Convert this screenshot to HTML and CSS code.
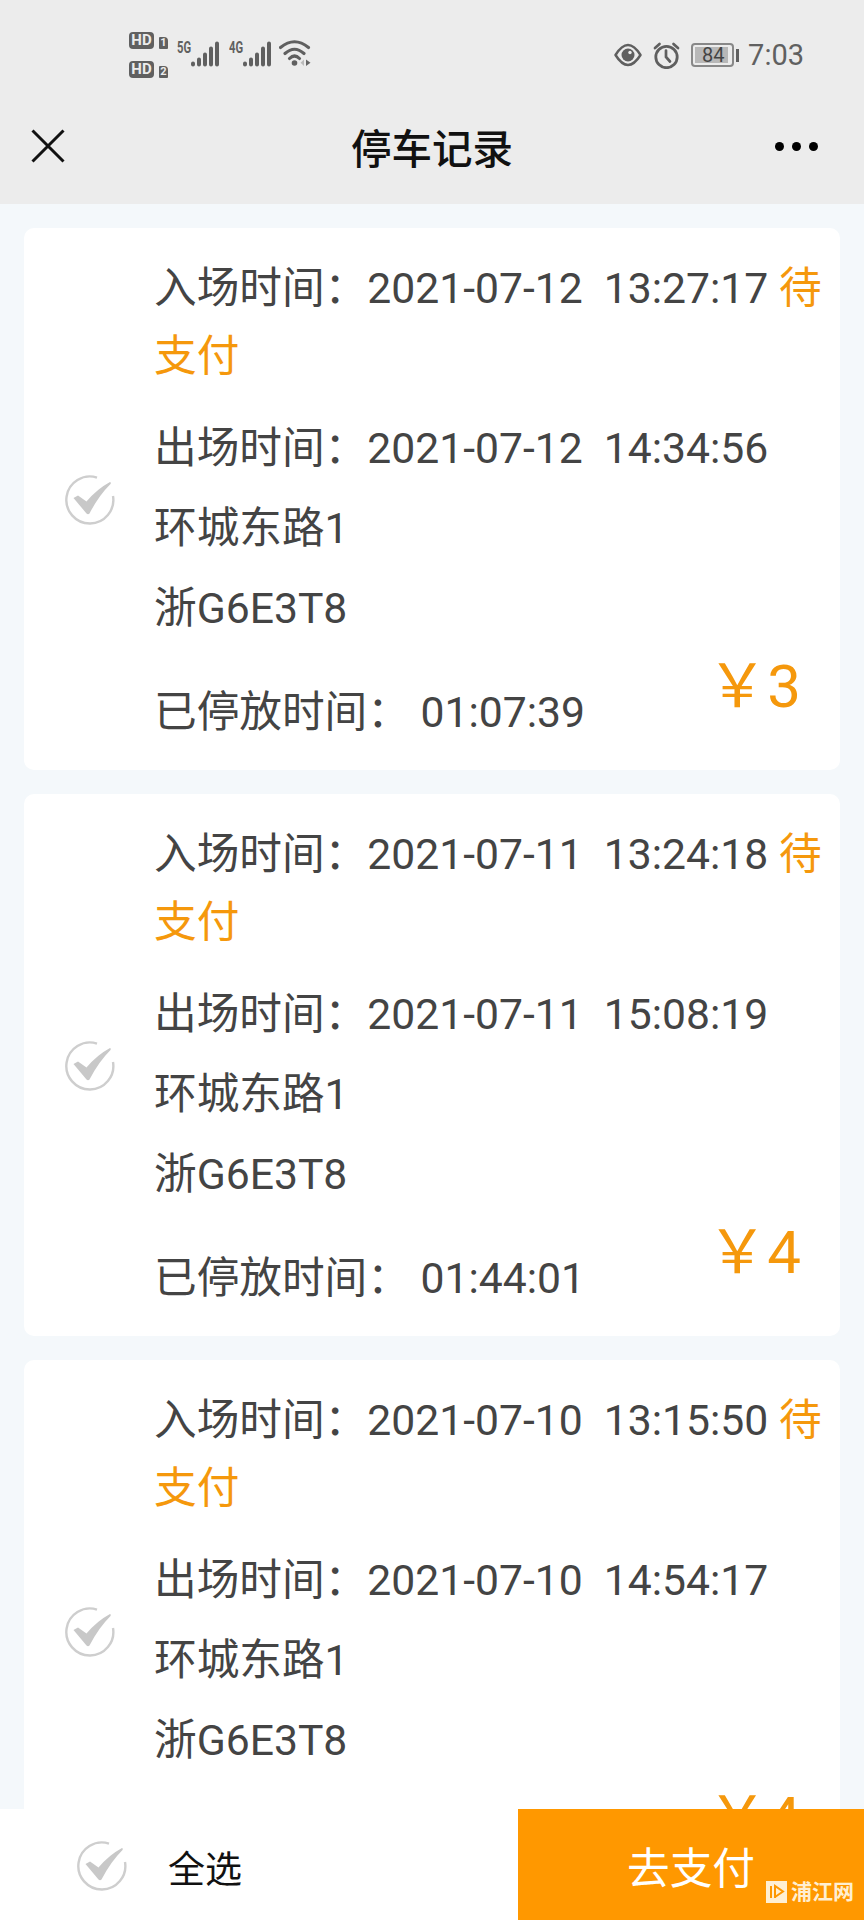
FILE: index.html
```
<!DOCTYPE html>
<html lang="zh-CN">
<head>
    <meta charset="UTF-8">
    <meta name="viewport" content="width=device-width, initial-scale=1.0">
    <title>停车记录</title>
    <link rel="stylesheet" href="styles.css">
</head>
<body>
    <svg class="defs" width="0" height="0">
        <symbol id="check" viewBox="0 0 50 50">
            <path d="M32 2.600A23.500 23.500 0 1 0 48 21" fill="none" stroke="#cecece" stroke-width="2.400"/>
            <path d="M8.500 23L13 20.500L21.500 26.500Q32 14 45 7Q46.500 7.500 45.500 9Q33.500 21 24.500 38.500Q23 40 21.500 38.500Z" fill="#c8c8c8"/>
        </symbol>
        <symbol id="signal" viewBox="0 0 28 26">
            <path d="M2 22.500V23.500M8 18.500V23.500M14 13.500V23.500M20 7.500V23.500M26 2.500V23.500" fill="none" stroke="#606060" stroke-width="4" stroke-linecap="round"/>
        </symbol>
    </svg>

    <header>
        <div class="status">
            <div class="status-left">
                <div class="sims">
                    <div><span class="hd">HD</span><span class="sim">1</span></div>
                    <div><span class="hd">HD</span><span class="sim">2</span></div>
                </div>
                <span class="net">5G</span>
                <svg class="signal" width="28" height="26"><use href="#signal"/></svg>
                <span class="net net-4g">4G</span>
                <svg class="signal" width="28" height="26"><use href="#signal"/></svg>
                <svg class="wifi" width="32" height="27" viewBox="0 0 32 27">
                    <path d="M1.500 7.500Q15.500-4 29.500 7.500M6 13.500Q15.500 5 25 13.500M10.500 18.500Q15.500 13.500 20.500 18.500" fill="none" stroke="#606060" stroke-width="3.100" stroke-linecap="round"/>
                    <circle cx="15.500" cy="23" r="2.800" fill="#606060"/>
                    <path d="M25 19.500V26L21.500 22.800Z" fill="#bbb"/>
                    <path d="M27 19.500L31.500 22.800L27 26Z" fill="#666"/>
                </svg>
            </div>
            <div class="status-right">
                <svg width="28" height="24" viewBox="0 0 28 24">
                    <path d="M1.500 12Q14-8 26.500 12Q14 32 1.500 12Z" fill="none" stroke="#5f5f5f" stroke-width="2.500" stroke-linejoin="round"/>
                    <circle cx="14" cy="12" r="6.500" fill="#5f5f5f"/>
                    <circle cx="16" cy="9.500" r="1.700" fill="#ececec"/>
                </svg>
                <svg class="alarm" width="27" height="27" viewBox="0 0 27 27">
                    <circle cx="13.500" cy="15" r="10.700" fill="none" stroke="#5f5f5f" stroke-width="2.800"/>
                    <path d="M13 8.500V15L17 19.500M2 6L6.500 2M20.500 2L25 6" fill="none" stroke="#5f5f5f" stroke-width="2.700" stroke-linecap="round"/>
                </svg>
                <div class="battery"><span>84</span></div>
                <i class="battery-cap"></i>
                <span class="clock">7:03</span>
            </div>
        </div>
        <div class="nav">
            <svg width="34" height="34" viewBox="0 0 34 34">
                <path d="M1.500 1.500L32.500 32.500M32.500 1.500L1.500 32.500" stroke="#111" stroke-width="3"/>
            </svg>
            <h1>停车记录</h1>
            <div class="more"><i></i><i></i><i></i></div>
        </div>
    </header>

    <main>
        <section class="card">
            <svg class="check"><use href="#check"/></svg>
            <div class="info">
                <p class="enter">入场时间：2021-07-12&nbsp; 13:27:17 <span class="state">待支付</span></p>
                <p>出场时间：2021-07-12&nbsp; 14:34:56</p>
                <p>环城东路1</p>
                <p>浙G6E3T8</p>
                <div class="bottom">
                    <p>已停放时间： 01:07:39</p>
                    <span class="price">￥3</span>
                </div>
            </div>
        </section>
        <section class="card">
            <svg class="check"><use href="#check"/></svg>
            <div class="info">
                <p class="enter">入场时间：2021-07-11&nbsp; 13:24:18 <span class="state">待支付</span></p>
                <p>出场时间：2021-07-11&nbsp; 15:08:19</p>
                <p>环城东路1</p>
                <p>浙G6E3T8</p>
                <div class="bottom">
                    <p>已停放时间： 01:44:01</p>
                    <span class="price">￥4</span>
                </div>
            </div>
        </section>
        <section class="card">
            <svg class="check"><use href="#check"/></svg>
            <div class="info">
                <p class="enter">入场时间：2021-07-10&nbsp; 13:15:50 <span class="state">待支付</span></p>
                <p>出场时间：2021-07-10&nbsp; 14:54:17</p>
                <p>环城东路1</p>
                <p>浙G6E3T8</p>
                <div class="bottom">
                    <p></p>
                    <span class="price">￥4</span>
                </div>
            </div>
        </section>
    </main>

    <footer>
        <div class="all">
            <svg class="check"><use href="#check"/></svg>
            <span>全选</span>
        </div>
        <div class="pay">去支付</div>
        <div class="watermark">
            <svg width="21" height="22" viewBox="0 0 21 22">
                <path d="M0 0H21V22H0Z" fill="#ffefd2"/>
                <path d="M5 5V17M9 17V5L17 10.500L9 16" fill="none" stroke="#ff9800" stroke-width="2"/>
            </svg>
            <span>浦江网</span>
        </div>
    </footer>
</body>
</html>
```
FILE: styles.css
```
* {
    box-sizing: border-box;
}
body {
    margin: 0;
    height: 1920px;
    display: flex;
    flex-direction: column;
    overflow: hidden;
    background: #f4f8fb;
    color: #444;
    font-family: Roboto, "Noto Sans CJK SC", sans-serif;
}
p, h1 {
    margin: 0;
}
svg {
    display: block;
    flex: none;
}
.defs {
    position: absolute;
}

/* header */
header {
    flex: none;
    height: 204px;
    background: #ececec;
}
.status {
    height: 92px;
    padding: 30px 60px 0 129px;
    display: flex;
    justify-content: space-between;
    color: #606060;
}
.status-left, .status-right {
    display: flex;
    align-items: flex-start;
}
.sims {
    display: flex;
    flex-direction: column;
    gap: 12px;
    margin-top: 2px;
    width: 48px;
}
.sims div {
    display: flex;
    align-items: flex-end;
    gap: 5px;
}
.hd, .sim {
    background: #606060;
    color: #ececec;
    border-radius: 4px;
    font-weight: bold;
    text-align: center;
}
.hd {
    width: 25px;
    height: 17px;
    font-size: 15px;
    line-height: 17px;
}
.sim {
    width: 9px;
    height: 12px;
    border-radius: 1px 4px 1px 1px;
    font-size: 11px;
    line-height: 12px;
}
.net {
    width: 14px;
    margin-top: 9px;
    font: bold 16px/17px Roboto, sans-serif;
    transform: scaleX(.7);
    transform-origin: left;
}
.net-4g {
    margin-left: 10px;
}
.signal {
    margin-top: 11px;
}
.wifi {
    margin: 10px 0 0 8px;
}
.status-right {
    align-items: center;
    height: 50px;
}
.alarm {
    margin-left: 11px;
}
.battery {
    width: 43px;
    height: 24px;
    margin-left: 11px;
    padding: 2px;
    border: 2px solid #888;
    border-radius: 4px;
}
.battery span {
    display: block;
    width: 33px;
    height: 16px;
    background: #b8b8b8;
    color: #444;
    font-size: 20px;
    line-height: 17px;
    padding-left: 7px;
}
.battery-cap {
    width: 3px;
    height: 13px;
    margin-left: 2px;
    background: #606060;
}
.clock {
    margin-left: 9px;
    font-size: 29px;
    line-height: 52px;
}
.nav {
    height: 108px;
    padding: 0 46px 0 31px;
    display: grid;
    grid-template-columns: 1fr auto 1fr;
    align-items: center;
    color: #111;
}
h1 {
    margin-left: 15px;
    font-size: 40.500px;
    font-weight: 500;
}
.more {
    display: flex;
    justify-content: flex-end;
    gap: 8px;
}
.more i {
    width: 9px;
    height: 9px;
    border-radius: 50%;
    background: #000;
}

/* records */
main {
    flex: 1;
    min-height: 0;
    overflow: hidden;
    padding: 24px 24px 0;
}
.card {
    display: flex;
    align-items: center;
    height: 542px;
    margin-bottom: 24px;
    border-radius: 10px;
    background: #fff;
}
.check {
    width: 50px;
    height: 50px;
    margin: 2px 39px 0 41px;
}
.info {
    flex: 1;
    align-self: stretch;
    padding-top: 26px;
    font-size: 42.670px;
    line-height: 68px;
}
.info p {
    margin-bottom: 12px;
}
.info .enter {
    margin-bottom: 24px;
}
.state, .price {
    color: #f5980c;
}
.bottom {
    display: flex;
    justify-content: space-between;
    padding-right: 39px;
}
.bottom p {
    padding-top: 24px;
}
.price {
    font-size: 60px;
    line-height: 66px;
}

/* footer */
footer {
    position: relative;
    flex: none;
    display: flex;
    height: 111px;
    background: #fff;
}
.all {
    display: flex;
    align-items: center;
    width: 518px;
    padding-left: 36px;
    color: #111;
    font-size: 37px;
}
.all span {
    margin: 4px 0 0 2px;
}
.pay {
    flex: 1;
    background: #ff9800;
    color: #fff;
    font-size: 42.670px;
    line-height: 120px;
    text-align: center;
}
.watermark {
    position: absolute;
    right: 10px;
    bottom: 17px;
    display: flex;
    gap: 4px;
    color: #ffefd2;
    font-size: 21px;
    font-weight: bold;
    line-height: 22px;
}
```
